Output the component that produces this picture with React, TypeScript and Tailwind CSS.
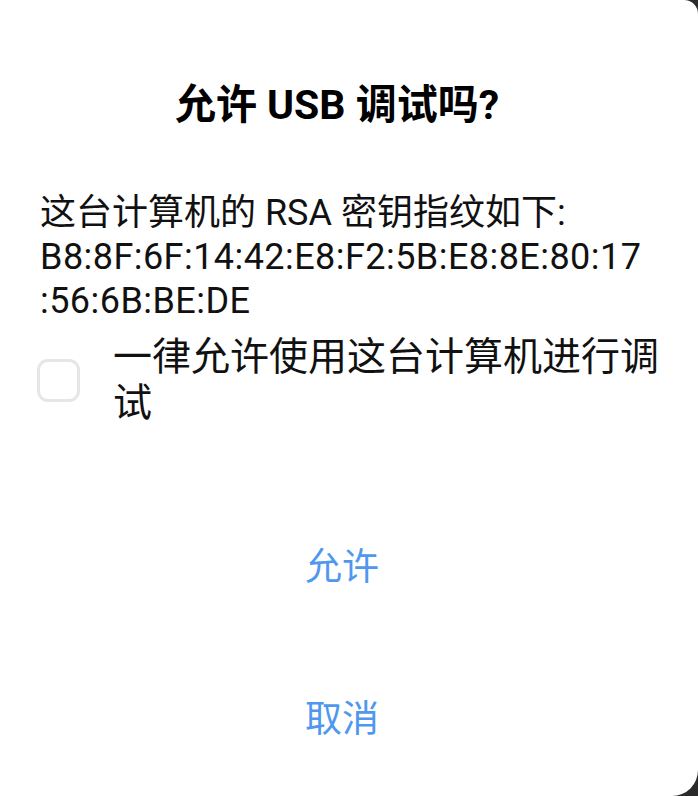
import React from "react";

export default function App() {
  const font = { fontFamily: 'Roboto, "Noto Sans CJK SC", "Noto Sans", sans-serif' };
  return (
    <div className="w-[698px] h-[796px] bg-[#2b2b2b] overflow-hidden" style={font}>
      <div className="w-full h-full bg-white rounded-tr-[14px] rounded-br-[26px] flex flex-col">
        <h1 className="pt-[83px] pr-[24px] text-center text-[41px] leading-[44px] font-bold text-black">
          允许 USB 调试吗?
        </h1>
        <div className="mt-[64px] pl-[40px] text-[36px] leading-[44px] text-[#111]">
          <div>这台计算机的 RSA 密钥指纹如下:</div>
          <div className="tracking-[0.45px]">B8:8F:6F:14:42:E8:F2:5B:E8:8E:80:17</div>
          <div className="tracking-[0.45px]">:56:6B:BE:DE</div>
        </div>
        <div className="mt-[11px] pl-[37px] flex items-center gap-[33px]">
          <div className="w-[43px] h-[43px] shrink-0 rounded-[11px] border-[3px] border-[#e6e6e6] bg-white" />
          <div className="text-[39px] leading-[46px] text-[#111] w-[560px]">
            一律允许使用这台计算机进行调试
          </div>
        </div>
        <button className="mt-[120px] self-center -translate-x-[7px] text-[37px] leading-[44px] text-[#5097ee]">
          允许
        </button>
        <button className="mt-[108px] self-center -translate-x-[7px] text-[37px] leading-[44px] text-[#5097ee]">
          取消
        </button>
      </div>
    </div>
  );
}
